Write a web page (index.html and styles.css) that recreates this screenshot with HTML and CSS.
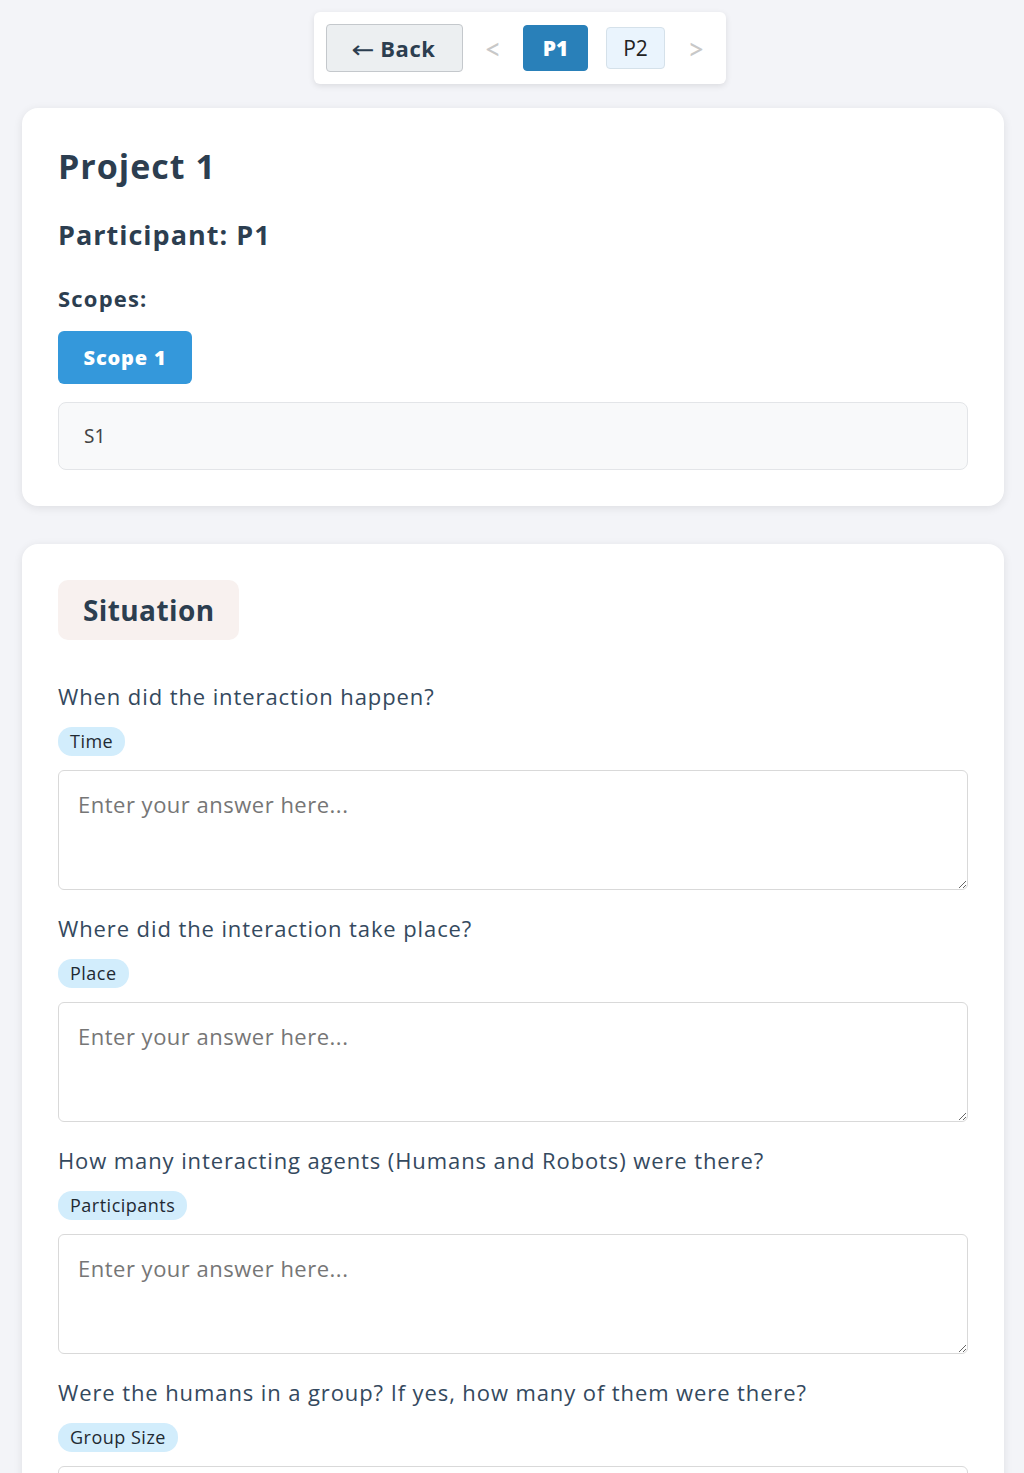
FILE: index.html
```html
<!DOCTYPE html>
<html lang="en">
<head>
<meta charset="utf-8">
<title>Project 1 - P1</title>
<link rel="stylesheet" href="styles.css">
</head>
<body>
<div class="top">
  <nav class="nav">
    <button class="back"><span class="larr">&larr;</span> Back</button>
    <span class="arrow prev">&lt;</span>
    <button class="pbtn active">P1</button>
    <button class="pbtn">P2</button>
    <span class="arrow next">&gt;</span>
  </nav>
</div>

<section class="card info">
  <h1 class="title">Project 1</h1>
  <h2 class="participant">Participant: P1</h2>
  <h3 class="scopes">Scopes:</h3>
  <button class="scope">Scope 1</button>
  <div class="scopebox">S1</div>
</section>

<section class="card form">
  <h2 class="section-title">Situation</h2>

  <div class="q">
    <p class="qtext">When did the interaction happen?</p>
    <span class="tag">Time</span>
    <textarea class="answer" placeholder="Enter your answer here..."></textarea>
  </div>

  <div class="q">
    <p class="qtext">Where did the interaction take place?</p>
    <span class="tag">Place</span>
    <textarea class="answer" placeholder="Enter your answer here..."></textarea>
  </div>

  <div class="q">
    <p class="qtext">How many interacting agents (Humans and Robots) were there?</p>
    <span class="tag">Participants</span>
    <textarea class="answer" placeholder="Enter your answer here..."></textarea>
  </div>

  <div class="q">
    <p class="qtext">Were the humans in a group? If yes, how many of them were there?</p>
    <span class="tag">Group Size</span>
    <textarea class="answer" placeholder="Enter your answer here..."></textarea>
  </div>
</section>
</body>
</html>
```

FILE: styles.css
```css
* { box-sizing: border-box; }

body {
  margin: 0;
  padding: 12px 20px 40px 22px;
  background: #f3f4f8;
  font-family: "Open Sans", "Noto Sans", sans-serif;
  color: #2c3e50;
}

.top {
  display: flex;
  justify-content: center;
  padding-left: 14px;
}

.nav {
  display: flex;
  align-items: center;
  background: #fff;
  border-radius: 6px;
  padding: 12px;
  box-shadow: 0 2px 6px rgba(0, 0, 0, 0.1);
}

.back {
  width: 137px;
  height: 48px;
  background: #eceff1;
  border: 1px solid #c4c8cc;
  border-radius: 4px;
  font-family: inherit;
  font-size: 22px;
  font-weight: 700;
  letter-spacing: 0.6px;
  color: #2c3e50;
  cursor: pointer;
  padding: 0;
  display: flex;
  align-items: center;
  justify-content: center;
  gap: 6px;
}

.larr {
  font-family: "DejaVu Sans", sans-serif;
  font-weight: 400;
  font-size: 24px;
  line-height: 1;
  margin-top: 3px;
  transform: scaleX(1.15);
}

.arrow {
  width: 18px;
  text-align: center;
  font-family: "Lato", sans-serif;
  font-size: 30px;
  line-height: 30px;
  color: #c8c8c8;
}

.arrow.prev {
  margin: 0 21px 0 21px;
}

.arrow.next {
  margin: 0 9px 0 22px;
}

.pbtn {
  height: 42px;
  width: 59px;
  background: #eaf4fd;
  border: 1px solid #d5e1ea;
  border-radius: 4px;
  font-family: inherit;
  font-size: 21px;
  color: #222;
  padding: 0;
}

.pbtn.active {
  height: 46px;
  width: 65px;
  background: #2980b9;
  border-color: #2980b9;
  color: #fff;
  font-weight: 800;
  margin-right: 18px;
}

.card {
  background: #fff;
  border-radius: 16px;
  box-shadow: 0 2px 10px rgba(0, 0, 0, 0.09);
  padding: 36px;
  width: 982px;
}

.info {
  margin-top: 24px;
}

.title {
  margin: 0;
  font-size: 34px;
  font-weight: 700;
  line-height: 44px;
  letter-spacing: 1px;
}

.participant {
  margin: 29px 0 0;
  font-size: 27px;
  font-weight: 700;
  line-height: 36px;
  letter-spacing: 1px;
}

.scopes {
  margin: 29px 0 0;
  font-size: 22px;
  font-weight: 700;
  line-height: 32px;
  letter-spacing: 1.2px;
}

.scope {
  display: block;
  margin-top: 17px;
  width: 134px;
  height: 53px;
  background: #3498db;
  color: #fff;
  border: none;
  border-radius: 6px;
  font-family: inherit;
  font-size: 20px;
  font-weight: 800;
  letter-spacing: 0.8px;
}

.scopebox {
  margin-top: 18px;
  height: 68px;
  background: #f8f9fa;
  border: 1px solid #e3e5e8;
  border-radius: 8px;
  padding: 0 25px;
  display: flex;
  align-items: center;
  font-family: "Noto Sans", sans-serif;
  font-size: 19px;
  color: #444;
}

.form {
  margin-top: 38px;
}

.section-title {
  display: inline-block;
  margin: 0;
  background: #f8f1ef;
  border-radius: 10px;
  padding: 0 25px;
  height: 60px;
  line-height: 60px;
  font-size: 28px;
  font-weight: 700;
  letter-spacing: 0.4px;
}

.q {
  margin-top: 41px;
}

.q + .q {
  margin-top: 23px;
}

.qtext {
  margin: 0;
  font-size: 22px;
  line-height: 30px;
  color: #34495e;
  letter-spacing: 0.9px;
}

.tag {
  display: inline-block;
  margin-top: 16px;
  background: #d2edfc;
  border-radius: 14px;
  padding: 0 12px;
  height: 29px;
  line-height: 29px;
  font-size: 18px;
  letter-spacing: 0.5px;
  color: #1f2a33;
}

.answer {
  display: block;
  width: 100%;
  height: 120px;
  margin-top: 14px;
  border: 1px solid #d9d9d9;
  border-radius: 6px;
  padding: 18px 19px;
  font-family: inherit;
  font-size: 22px;
  letter-spacing: 0.5px;
  color: #333;
  resize: vertical;
}

.answer::placeholder {
  color: #767676;
}
```
